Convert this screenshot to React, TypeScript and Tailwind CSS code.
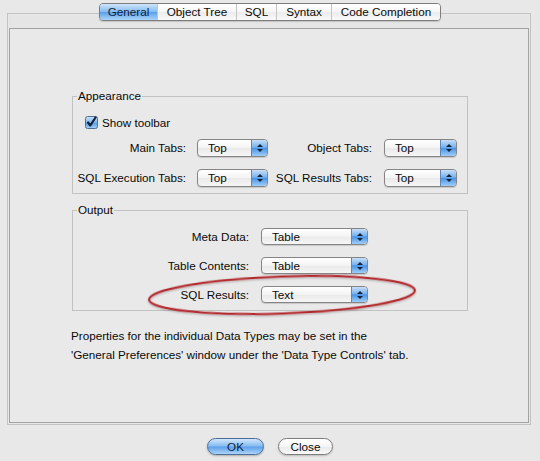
const tabs = [
  { label: "General", width: "w-[57px]", active: true },
  { label: "Object Tree", width: "w-[79px]", active: false },
  { label: "SQL", width: "w-[40px]", active: false },
  { label: "Syntax", width: "w-[55px]", active: false },
  { label: "Code Completion", width: "w-[109px]", active: false },
];

function Stepper() {
  return (
    <span className="flex w-[16px] flex-col items-center justify-center gap-[2px] rounded-r-[3px] border-l border-[#5f86b8] bg-[linear-gradient(#c6def8,#79b2ee_45%,#4a93e4_52%,#9fcdf8)]">
      <svg width="6" height="3" viewBox="0 0 6 3">
        <path d="M0 3 L3 0 L6 3 Z" fill="#14243a" />
      </svg>
      <svg width="6" height="3" viewBox="0 0 6 3">
        <path d="M0 0 L6 0 L3 3 Z" fill="#14243a" />
      </svg>
    </span>
  );
}

function Select({ value, className }: { value: string; className: string }) {
  return (
    <div
      className={`flex items-stretch overflow-hidden rounded-[4px] border border-[#858585] bg-[linear-gradient(#ffffff,#f3f3f3_50%,#e9e9e9_51%,#f6f6f6)] shadow-[0_1px_1px_rgba(0,0,0,0.15)] ${className}`}
    >
      <span className="flex flex-1 items-center pl-[10px]">{value}</span>
      <Stepper />
    </div>
  );
}

function Checkbox() {
  return (
    <svg width="13" height="13" viewBox="0 0 13 13">
      <defs>
        <linearGradient id="cb" x1="0" y1="0" x2="0" y2="1">
          <stop offset="0" stopColor="#d0e5fa" />
          <stop offset="0.5" stopColor="#7db6ee" />
          <stop offset="0.52" stopColor="#5298e6" />
          <stop offset="1" stopColor="#a8d3fa" />
        </linearGradient>
      </defs>
      <rect x="0.5" y="0.5" width="12" height="12" rx="2" fill="url(#cb)" stroke="#52708f" />
      <path d="M3 6.5 L5.3 9.5 L10.5 1.5" fill="none" stroke="#14233a" strokeWidth="2.2" strokeLinecap="round" strokeLinejoin="round" />
    </svg>
  );
}

export default function App() {
  return (
    <div className="relative h-[461px] w-[540px] overflow-hidden bg-[#e8e8e8] font-['Liberation_Sans',Arial,sans-serif] text-[11.7px] leading-none text-[#0a0a0a]">
      {/* tab strip */}
      <div className="relative z-10 flex justify-center pt-[3px]">
        <div className="flex h-[18px] overflow-hidden rounded-[4px] border border-[#7d7d7d] shadow-[0_1px_1px_rgba(0,0,0,0.15)]">
          {tabs.map((t, i) => (
            <div
              key={t.label}
              className={`flex items-center justify-center ${t.width} ${i > 0 ? "border-l border-[#c4c4c4]" : ""} ${
                t.active
                  ? "bg-[linear-gradient(#d0e5fa,#86bcf1_48%,#5d9fe8_52%,#acd5fb)] text-[#0d1f3d]"
                  : "bg-[linear-gradient(#ffffff,#f6f6f6_50%,#ececec_51%,#f9f9f9)]"
              }`}
            >
              {t.label}
            </div>
          ))}
        </div>
      </div>

      {/* tab pane */}
      <div className="-mt-[8px] ml-[7px] flex h-[412px] w-[524px] flex-col border border-[#c2c2c2] p-px">
        <div className="h-[13px] bg-[#e5e5e5]" />
        <div className="flex flex-1 flex-col border border-[#a3a3a3] bg-[#e9e9e9] pl-[61px]">
          <fieldset className="ml-px mt-[61px] w-[396px] border border-[#c2c2c2] pb-[6px] pt-[14px]">
            <legend className="ml-[4px] px-[1px] leading-[12px]">Appearance</legend>
            <div className="flex items-center gap-[4px] pl-[12px]">
              <Checkbox />
              <span>Show toolbar</span>
            </div>
            <div className="mt-[10px] flex flex-col gap-[12px]">
              <div className="flex items-center">
                <span className="w-[113px] text-right">Main Tabs:</span>
                <Select value="Top" className="ml-[11px] h-[18px] w-[71px]" />
                <span className="w-[104px] text-right">Object Tabs:</span>
                <Select value="Top" className="ml-[12px] h-[18px] w-[73px]" />
              </div>
              <div className="flex items-center">
                <span className="w-[113px] text-right">SQL Execution Tabs:</span>
                <Select value="Top" className="ml-[11px] h-[18px] w-[71px]" />
                <span className="w-[104px] text-right">SQL Results Tabs:</span>
                <Select value="Top" className="ml-[12px] h-[18px] w-[73px]" />
              </div>
            </div>
          </fieldset>

          <fieldset className="ml-px mt-[10px] w-[396px] border border-[#c2c2c2] pb-[7px] pt-[12px]">
            <legend className="ml-[4px] px-[1px] leading-[12px]">Output</legend>
            <div className="flex flex-col gap-[12px]">
              {[
                ["Meta Data:", "Table"],
                ["Table Contents:", "Table"],
                ["SQL Results:", "Text"],
              ].map(([label, value]) => (
                <div key={label} className="flex items-center">
                  <span className="w-[176px] text-right">{label}</span>
                  <Select value={value} className="ml-[12px] h-[17px] w-[107px]" />
                </div>
              ))}
            </div>
          </fieldset>

          <p className="mt-[15px] leading-[19px]">
            Properties for the individual Data Types may be set in the
            <br />
            'General Preferences' window under the 'Data Type Controls' tab.
          </p>
        </div>
      </div>

      {/* dialog buttons */}
      <div className="mt-[13px] flex justify-center gap-[14px]">
        <button className="h-[17px] w-[57px] rounded-full border border-[#4d6f96] bg-[linear-gradient(#d0e5fa,#86bcf1_48%,#5d9fe8_52%,#acd5fb)] text-[#0d1f3d] shadow-[0_1px_2px_rgba(0,0,0,0.25)]">
          OK
        </button>
        <button className="h-[17px] w-[55px] rounded-full border border-[#7d7d7d] bg-[linear-gradient(#ffffff,#f5f5f5_50%,#eaeaea_51%,#f8f8f8)] shadow-[0_1px_2px_rgba(0,0,0,0.2)]">
          Close
        </button>
      </div>

      {/* red annotation ellipse */}
      <svg className="absolute left-[144px] top-[272px]" width="276" height="46" viewBox="0 0 276 46">
        <defs>
          <filter id="sh" x="-10%" y="-30%" width="120%" height="160%">
            <feDropShadow dx="0" dy="1" stdDeviation="1" floodColor="#000" floodOpacity="0.3" />
          </filter>
        </defs>
        <ellipse
          cx="138"
          cy="23"
          rx="133"
          ry="18.5"
          transform="rotate(-2 138 23)"
          fill="none"
          stroke="#b3262c"
          strokeWidth="2"
          filter="url(#sh)"
        />
      </svg>
    </div>
  );
}
